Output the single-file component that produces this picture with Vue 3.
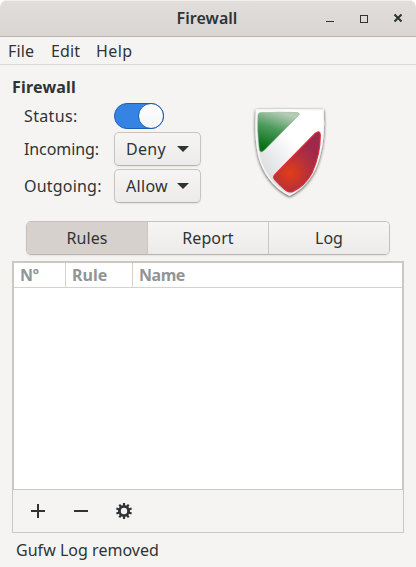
<script setup>
import { ref } from 'vue'

const menus = [
  { text: 'File', cls: 'm-file' },
  { text: 'Edit', cls: 'm-edit' },
  { text: 'Help', cls: 'm-help' },
]
const tabs = ['Rules', 'Report', 'Log']
const active = ref('Rules')
const columns = ['Nº', 'Rule', 'Name']
const teeth = [0, 36, 72, 108, 144, 180, 216, 252, 288, 324]
</script>

<template>
  <div class="window">
    <header class="titlebar">
      <span class="side"></span>
      <span class="title">Firewall</span>
      <span class="side controls">
        <svg width="84" height="16" viewBox="0 0 84 16" fill="none" stroke="#2e3436">
          <path d="M0 11.5h8" />
          <rect x="34.5" y="5.5" width="7" height="7" />
          <path d="M68.5 4.5l7 7M75.5 4.5l-7 7" stroke-width="2.1" />
        </svg>
      </span>
    </header>
    <nav class="menubar">
      <span v-for="m in menus" :key="m.text" :class="m.cls">{{ m.text }}</span>
    </nav>
    <main class="body">
      <section class="top">
        <div class="settings">
          <h1>Firewall</h1>
          <div class="row status">
            <label>Status:</label>
            <span class="switch"><i></i></span>
          </div>
          <div class="row">
            <label class="l-in">Incoming:</label>
            <button class="combo"><span>Deny</span><svg width="12" height="6" viewBox="0 0 12 6"><path d="M0 0h12L6 6z" fill="#2e3436" /></svg></button>
          </div>
          <div class="row">
            <label class="l-out">Outgoing:</label>
            <button class="combo"><span>Allow</span><svg width="12" height="6" viewBox="0 0 12 6"><path d="M0 0h12L6 6z" fill="#2e3436" /></svg></button>
          </div>
        </div>
        <svg class="shield" width="80" height="96" viewBox="0 0 80 96">
          <defs>
            <linearGradient id="base" x1="0" y1="1" x2="1" y2="0">
              <stop offset="0.2" stop-color="#dddee0" />
              <stop offset="0.6" stop-color="#fff" />
            </linearGradient>
            <linearGradient id="green" x1="0.5" y1="0" x2="0.2" y2="0.9">
              <stop offset="0" stop-color="#b4cbb6" />
              <stop offset="0.45" stop-color="#4d9a5c" />
              <stop offset="1" stop-color="#087018" />
            </linearGradient>
            <radialGradient id="red" gradientUnits="userSpaceOnUse" cx="41" cy="69" r="34">
              <stop offset="0" stop-color="#e33d16" />
              <stop offset="0.6" stop-color="#b12f3d" />
              <stop offset="1" stop-color="#9c294c" />
            </radialGradient>
            <filter id="shadow" x="-20%" y="-20%" width="140%" height="140%">
              <feDropShadow dx="0" dy="1" stdDeviation="1.4" flood-color="#222" flood-opacity="0.85" />
            </filter>
          </defs>
          <path d="M7.5 6Q40 5.5 74 6C75 23 74 40 70 53C66 69 56 84 40.5 91C25 84 14 68 10 52C7 39 6.500 21 7.500 6Z" fill="url(#base)" stroke="#f8f8f8" stroke-width="1.5" filter="url(#shadow)" />
          <path d="M12 8.500Q29 7.800 48 8.500Q52 9 49 12L15 46.500Q11 50 10.300 45Q8 26 9 11Q9.200 8.700 12 8.500Z" fill="url(#green)" stroke="#79ae80" stroke-width="0.5" />
          <path d="M26 70.500L66 29.500Q71.500 25 71.300 32Q71.500 50 63 69Q56 82 44 87.500Q41 89 37 86.500Q30 81 25.500 75.500Q23.500 73 26 70.500Z" fill="url(#red)" stroke="#e22b38" stroke-width="1.1" />
        </svg>
      </section>
      <div class="tabs">
        <button v-for="t in tabs" :key="t" :class="['t-' + t.toLowerCase(), { on: t === active }]" @click="active = t">{{ t }}</button>
      </div>
      <section class="table">
        <div class="head">
          <span v-for="(c, i) in columns" :key="c" :class="'c' + i">{{ c }}</span>
        </div>
      </section>
      <div class="tools">
        <svg width="16" height="16" viewBox="0 0 16 16"><path d="M1 8h14M8 1v14" stroke="#2e3436" stroke-width="2" /></svg>
        <svg width="16" height="16" viewBox="0 0 16 16"><path d="M1 8h14" stroke="#2e3436" stroke-width="2" /></svg>
        <svg width="16" height="16" viewBox="0 0 16 16">
          <circle cx="8" cy="8" r="4.6" fill="none" stroke="#2e3436" stroke-width="2.8" />
          <rect v-for="a in teeth" :key="a" x="6.9" y="0" width="2.2" height="3" fill="#2e3436" :transform="`rotate(${a} 8 8)`" />
        </svg>
      </div>
      <footer class="statusbar">Gufw Log removed</footer>
    </main>
  </div>
</template>

<style>
body { margin: 0; background: #fff; }
</style>

<style scoped>
* { box-sizing: border-box; }
.window {
  width: 416px;
  height: 567px;
  background: #f5f4f2;
  border-radius: 8px 8px 0 0;
  overflow: hidden;
  color: #2e3436;
  font: 16px/20px "Noto Sans", sans-serif;
  letter-spacing: -0.03px;
  white-space: nowrap;
}
.titlebar {
  display: flex;
  align-items: center;
  height: 37px;
  border-bottom: 1px solid #b9b4ae;
  background: linear-gradient(#e1dedb, #dad6d2);
  box-shadow: inset 0 1px #f3f1f0;
}
.side { flex: 1; display: flex; }
.controls { justify-content: flex-end; padding-right: 6px; }
.title { padding-left: 4px; font-weight: 600; font-size: 16px; letter-spacing: 0.05px; }
.menubar {
  display: flex;
  height: 28px;
  padding: 4px 8px;
  border-bottom: 1px solid #dbd9d6;
  letter-spacing: 0.15px;
}
.m-file { width: 43px; }
.m-edit { width: 45px; }
.m-help { letter-spacing: 0.4px; }
.body { padding: 12px 12px 0; }
.top { display: flex; height: 144px; }
.settings { width: 236px; }
h1 { margin: 0; font-size: 16px; line-height: 20px; height: 26px; font-weight: 700; letter-spacing: 0.2px; }
.row { display: flex; align-items: center; height: 34px; margin-bottom: 3px; padding-left: 12px; }
.row.status { height: 26px; }
label { width: 90px; }
.status label { letter-spacing: 0.35px; }
.l-in { letter-spacing: -0.1px; }
.l-out { letter-spacing: 0.2px; }
.switch {
  display: flex;
  justify-content: flex-end;
  width: 50px;
  height: 26px;
  border: 1px solid #1b5fb4;
  border-radius: 13px;
  background: #3584e4;
}
.switch i { width: 26px; height: 26px; margin: -1px; border: 1px solid #1b5fb4; border-radius: 50%; background: linear-gradient(#fff, #f5f5f4); }
button { font: inherit; color: inherit; letter-spacing: inherit; margin: 0; }
.combo {
  display: flex;
  align-items: center;
  justify-content: space-between;
  width: 87px;
  height: 34px;
  padding: 0 11px;
  border: 1px solid #c9c4be;
  border-bottom-color: #b9b3ac;
  border-radius: 5px;
  background: linear-gradient(#f6f5f4, #edebe9);
  box-shadow: 0 1px 2px rgba(0, 0, 0, 0.07);
}
.combo span { letter-spacing: 0.3px; }
.shield { margin-top: 27px; margin-left: 1px; }
.tabs {
  display: flex;
  width: 364px;
  height: 34px;
  margin-left: 14px;
  border: 1px solid #c6c1bb;
  border-bottom-color: #b9b3ac;
  border-radius: 5px;
  overflow: hidden;
  box-shadow: 0 1px 2px rgba(0, 0, 0, 0.07);
}
.tabs button { width: 121px; padding: 0; border: 0; border-right: 1px solid #cbc7c2; background: linear-gradient(#f6f5f4, #edebe9); letter-spacing: 0.1px; }
.tabs .t-log { flex: 1; border-right: 0; letter-spacing: 0; }
.tabs button.on { background: #d6d1cd; }
.table { height: 228px; margin-top: 6px; border: 2px solid #cdc7c2; border-bottom: 0; background: #fff; }
.head { display: flex; height: 25px; border-bottom: 1px solid #d5d1cd; color: #929595; font-weight: 700; line-height: 24px; letter-spacing: -0.25px; }
.head span { padding-left: 6px; border-right: 1px solid #d5d1cd; }
.c0 { width: 52px; }
.c1 { width: 67px; letter-spacing: 0.05px; }
.head .c2 { border-right: 0; letter-spacing: -0.45px; }
.tools { display: flex; gap: 27px; height: 44px; padding: 13px 17px; border: 1px solid #cdc7c2; }
.statusbar { padding: 7px 4px 0; letter-spacing: 0.03px; }
</style>
